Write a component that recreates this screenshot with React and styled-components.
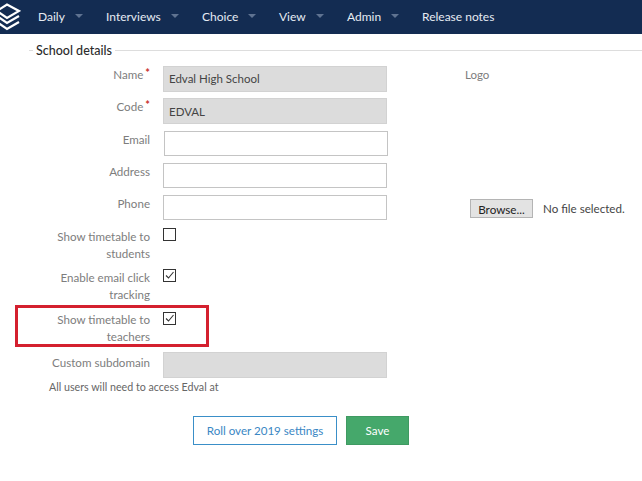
import styled, { createGlobalStyle } from "styled-components";

const GlobalStyle = createGlobalStyle`
  html, body {
    margin: 0;
    padding: 0;
    background: #fff;
  }
  body {
    font-family: Lato, "Liberation Sans", sans-serif;
    font-size: 12px;
    color: #777;
  }
`;

const Page = styled.div`
  width: 642px;
  height: 481px;
  overflow: hidden;
`;

const Navbar = styled.nav`
  height: 34px;
  background: #132c52;
  display: flex;
  align-items: center;
  overflow: hidden;
`;

const LogoMark = styled.svg`
  flex: none;
  width: 21px;
  height: 34px;
  margin-right: 17px;
`;

const NavItem = styled.a`
  display: flex;
  align-items: center;
  width: ${(p) => p.$width}px;
  flex: none;
  margin-bottom: 2px;
  color: #e6ebf2;
  font-size: 12px;
  white-space: nowrap;
`;

const Caret = styled.span`
  width: 0;
  height: 0;
  margin-left: 10px;
  border-left: 4px solid transparent;
  border-right: 4px solid transparent;
  border-top: 4px solid #5f7391;
`;

const Content = styled.main`
  display: flex;
`;

const Form = styled.form`
  flex: none;
  width: 465px;
`;

const SectionTitle = styled.div`
  display: flex;
  align-items: center;
  gap: 3px;
  height: 16px;
  margin: 8px 0 8px 29px;
  width: 613px;
  color: #2b2b2b;
  font-size: 12.5px;
  font-weight: 500;
  white-space: nowrap;
  &::before {
    content: "";
    width: 4px;
    border-top: 1px solid #ddd;
  }
  &::after {
    content: "";
    flex: 1;
    border-top: 1px solid #ddd;
  }
`;

const Row = styled.div`
  position: relative;
  display: grid;
  grid-template-columns: 105px 224px;
  column-gap: 13px;
  padding-left: 45px;
  height: ${(p) => p.$height || 26}px;
  margin-top: ${(p) => p.$top || 0}px;
`;

const Label = styled.label`
  text-align: right;
  font-size: 11.6px;
  line-height: 17px;
  color: #7d7d7d;
  padding-top: ${(p) => p.$pad ?? 0}px;
`;

const Star = styled.span`
  color: #c9302c;
  margin-left: 2px;
  font-size: 11px;
  font-weight: 700;
  line-height: 0;
  vertical-align: 2px;
`;

const TextInput = styled.input`
  box-sizing: border-box;
  width: 224px;
  height: 100%;
  margin-left: ${(p) => (p.$nudge ? 1 : 0)}px;
  padding: 0 5px ${(p) => (p.$raised ? 2 : 0)}px;
  font: 11.5px Lato, "Liberation Sans", sans-serif;
  color: #444;
  outline: none;
  background: ${(p) => (p.disabled ? "#dcdcdc" : "#fff")};
  border: 1px solid ${(p) => (p.disabled ? "#d2d2d2" : "#c4c4c4")};
`;

const Check = styled.span`
  box-sizing: border-box;
  display: block;
  width: 13px;
  height: 13px;
  margin-top: 1px;
  border: 1px solid #333;
  background: #fff;
  svg {
    display: block;
  }
`;

const Highlight = styled.div`
  position: absolute;
  left: 15px;
  top: -6px;
  width: 194px;
  height: 42px;
  box-sizing: border-box;
  border: 3px solid #d4202f;
  pointer-events: none;
`;

const Note = styled.p`
  margin: 2px 0 0 49px;
  font-size: 10.7px;
  line-height: 14px;
  color: #666;
`;

const Actions = styled.div`
  display: flex;
  gap: 9px;
  margin: 22px 0 0 193px;
`;

const Button = styled.button`
  box-sizing: border-box;
  height: 29px;
  width: ${(p) => p.$width}px;
  font: 11.6px Lato, "Liberation Sans", sans-serif;
  color: ${(p) => (p.$primary ? "#fff" : "#3a87c4")};
  background: ${(p) => (p.$primary ? "#45a86b" : "#fff")};
  border: 1px solid ${(p) => (p.$primary ? "#3f9a62" : "#3a8fc8")};
  padding: 0;
`;

const Aside = styled.aside`
  flex: none;
  width: 177px;
  padding-top: 34px;
`;

const LogoLabel = styled.div`
  font-size: 11.5px;
  line-height: 14px;
  color: #7d7d7d;
`;

const FileRow = styled.div`
  display: flex;
  align-items: center;
  gap: 10px;
  margin: 117px 0 0 5px;
  font: 11.6px Lato, "Liberation Sans", sans-serif;
  color: #444;
  white-space: nowrap;
`;

const BrowseButton = styled.button`
  box-sizing: border-box;
  width: 63px;
  height: 19px;
  padding: 0;
  font: 11.7px Lato, "Liberation Sans", sans-serif;
  color: #222;
  background: #e3e3e3;
  border: 1px solid #b4b4b4;
`;

const Tick = () => (
  <svg width="11" height="11" viewBox="0 0 11 11">
    <path d="M2 5.5 L4.5 8 L9.5 2" fill="none" stroke="#333" strokeWidth="1.1" />
  </svg>
);

const navItems = [
  { name: "Daily", width: 68, caret: true },
  { name: "Interviews", width: 96, caret: true },
  { name: "Choice", width: 77, caret: true },
  { name: "View", width: 68, caret: true },
  { name: "Admin", width: 75, caret: true },
  { name: "Release notes", width: 100 },
];

const App = () => {
  return (
    <Page>
      <GlobalStyle />
      <Navbar>
        <LogoMark viewBox="0 0 21 34">
          <path d="M-3 11 L7 4.5 L19 11 L7 18 Z" fill="none" stroke="#fff" strokeWidth="2.2" />
          <path d="M-3 16 L7 23 L19 16" fill="none" stroke="#fff" strokeWidth="2.2" />
          <path d="M-3 22 L7 29 L19 22" fill="none" stroke="#fff" strokeWidth="2.2" />
        </LogoMark>
        {navItems.map((item) => (
          <NavItem key={item.name} $width={item.width}>
            {item.name}
            {item.caret && <Caret />}
          </NavItem>
        ))}
      </Navbar>
      <Content>
        <Form>
          <SectionTitle>School details</SectionTitle>
          <Row>
            <Label>Name<Star>*</Star></Label>
            <TextInput disabled $raised value="Edval High School" readOnly />
          </Row>
          <Row $top={6}>
            <Label>Code<Star>*</Star></Label>
            <TextInput disabled value="EDVAL" readOnly />
          </Row>
          <Row $top={7} $height={25}>
            <Label>Email</Label>
            <TextInput $nudge />
          </Row>
          <Row $top={7} $height={25}>
            <Label>Address</Label>
            <TextInput />
          </Row>
          <Row $top={7} $height={25}>
            <Label>Phone</Label>
            <TextInput />
          </Row>
          <Row $top={7} $height={35}>
            <Label $pad={1}>Show timetable to students</Label>
            <Check />
          </Row>
          <Row $top={6} $height={35}>
            <Label $pad={1}>Enable email click tracking</Label>
            <Check><Tick /></Check>
          </Row>
          <Row $top={8} $height={35}>
            <Highlight />
            <Label>Show timetable to teachers</Label>
            <Check><Tick /></Check>
          </Row>
          <Row $top={6}>
            <Label $pad={2}>Custom subdomain</Label>
            <TextInput disabled />
          </Row>
          <Note>All users will need to access Edval at</Note>
          <Actions>
            <Button type="button" $width={144}>Roll over 2019 settings</Button>
            <Button type="button" $width={63} $primary>Save</Button>
          </Actions>
        </Form>
        <Aside>
          <LogoLabel>Logo</LogoLabel>
          <FileRow>
            <BrowseButton type="button">Browse...</BrowseButton>
            No file selected.
          </FileRow>
        </Aside>
      </Content>
    </Page>
  );
};

export default App;
